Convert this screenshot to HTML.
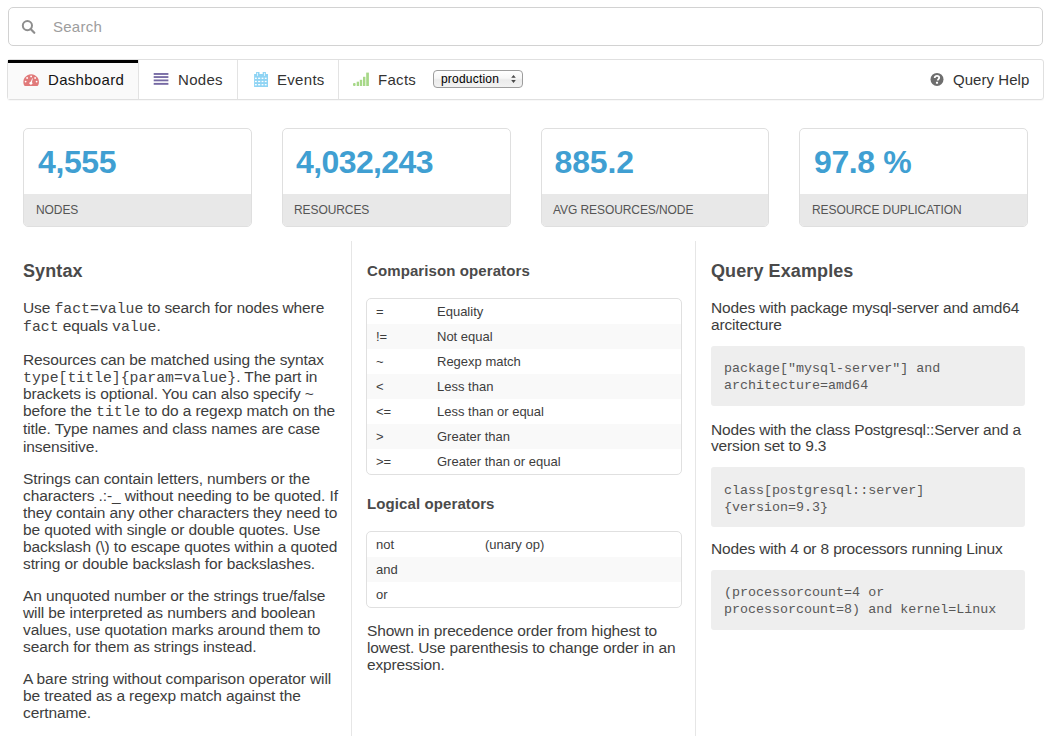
<!DOCTYPE html><html><head><meta charset="utf-8"><title>Query Help</title><style>
*{margin:0;padding:0;box-sizing:border-box}
html,body{width:1051px;height:745px;overflow:hidden;background:#fff;font-family:"Liberation Sans",sans-serif;color:#333}
.l{position:absolute;white-space:nowrap}
.a{position:absolute}
code{font-family:"Liberation Mono",monospace;font-size:14.8px;color:#444;letter-spacing:0}
.box{position:absolute;border:1px solid #dfdfdf;border-radius:5px;overflow:hidden;background:#fff}
.box .ft{position:absolute;left:0;right:0;bottom:0;height:32px;background:#e8e8e8}
.vsep{position:absolute;top:241px;width:1px;height:495px;background:#e6e6e6}
.tbl{position:absolute;border:1px solid #e0e0e0;border-radius:5px;overflow:hidden;background:#fff}
.stripe{position:absolute;left:0;right:0;height:25px;background:#f9f9f9}
.pre{position:absolute;background:#eeeeee;border-radius:3px}
</style></head><body>
<div class="a" style="left:8px;top:7px;width:1035px;height:39px;border:1px solid #d2d2d2;border-radius:5px"></div>
<svg class="a" style="left:20px;top:18px" width="18" height="18" viewBox="0 0 18 18"><circle cx="7.4" cy="7.6" r="4.6" fill="none" stroke="#8e8e8e" stroke-width="2"/><line x1="10.6" y1="11" x2="14.3" y2="14.8" stroke="#8e8e8e" stroke-width="2.2" stroke-linecap="round"/></svg>
<div class="l" style="left:53px;top:18px;font-size:15px;line-height:18px;color:#9d9d9d;font-weight:normal;letter-spacing:0.25px">Search</div>
<div class="a" style="left:7px;top:59px;width:1037px;height:41px;border:1px solid #e0e0e0;border-radius:3px;box-shadow:0 1px 1px rgba(0,0,0,0.03)"></div>
<div class="a" style="left:8px;top:60px;width:130px;height:39px;background:#fafafa"></div>
<div class="a" style="left:8px;top:60px;width:130px;height:3px;background:#000"></div>
<div class="a" style="left:138px;top:60px;width:1px;height:39px;background:#e3e3e3"></div>
<div class="a" style="left:237px;top:60px;width:1px;height:39px;background:#e3e3e3"></div>
<div class="a" style="left:338px;top:60px;width:1px;height:39px;background:#e3e3e3"></div>
<svg class="a" style="left:22px;top:72px" width="18" height="16" viewBox="0 0 18 16"><path d="M2.08 13.3 A7.8 7.8 0 1 1 16.22 13.3 Q15.9 14 15.2 14 L3.1 14 Q2.4 14 2.08 13.3 Z" fill="#e17a7a"/><g fill="#fff"><circle cx="9.1" cy="4.4" r="0.9"/><circle cx="5.1" cy="6.0" r="0.9"/><circle cx="13.1" cy="6.0" r="0.9"/><circle cx="3.6" cy="9.6" r="0.9"/><circle cx="14.6" cy="9.6" r="0.9"/><circle cx="8.9" cy="11.2" r="1.45"/><path d="M8.3 11.0 L10.2 6.3 L10.8 6.5 L9.6 11.3 Z"/></g></svg>
<div class="l" style="left:48px;top:71px;font-size:15px;line-height:18px;color:#141414;font-weight:normal;letter-spacing:0.3px">Dashboard</div>
<svg class="a" style="left:153px;top:72px" width="16" height="14" viewBox="0 0 16 14"><g fill="#7569a3"><rect x="0.7" y="1.05" width="14.7" height="1.85"/><rect x="0.7" y="4.15" width="14.7" height="1.8"/><rect x="0.7" y="7.5" width="14.7" height="1.8"/><rect x="0.7" y="10.9" width="14.7" height="1.9"/></g></svg>
<div class="l" style="left:178px;top:71px;font-size:15px;line-height:18px;color:#333;font-weight:normal;letter-spacing:0.3px">Nodes</div>
<svg class="a" style="left:254px;top:72px" width="15" height="15" viewBox="0 0 15 15"><path d="M0.1 2.1 H2.1 V0.05 H5.5 V2.1 H8.7 V0.05 H11.9 V2.1 H14 V14.9 H0.1 Z" fill="#8fd4f4"/><g fill="#fff"><rect x="1.0" y="5.65" width="1.8" height="1.3"/><rect x="4.1" y="5.65" width="2.1" height="1.3"/><rect x="7.6" y="5.65" width="1.8" height="1.3"/><rect x="10.8" y="5.65" width="1.8" height="1.3"/><rect x="1.0" y="8.85" width="1.8" height="1.3"/><rect x="4.1" y="8.85" width="2.1" height="1.3"/><rect x="7.6" y="8.85" width="1.8" height="1.3"/><rect x="10.8" y="8.85" width="1.8" height="1.3"/><rect x="1.0" y="12.05" width="1.8" height="1.3"/><rect x="4.1" y="12.05" width="2.1" height="1.3"/><rect x="7.6" y="12.05" width="1.8" height="1.3"/><rect x="10.8" y="12.05" width="1.8" height="1.3"/><rect x="3.3" y="0.9" width="0.7" height="3"/><rect x="10.1" y="0.9" width="0.7" height="3"/></g></svg>
<div class="l" style="left:277px;top:71px;font-size:15px;line-height:18px;color:#333;font-weight:normal;letter-spacing:0.3px">Events</div>
<svg class="a" style="left:353px;top:72px" width="17" height="15" viewBox="0 0 17 15"><g fill="#a7d888"><rect x="0" y="11" width="2.6" height="3" rx="1"/><rect x="3.7" y="9.7" width="2.3" height="4.3"/><rect x="6.8" y="7.8" width="2.4" height="6.2"/><rect x="10" y="4.8" width="2.4" height="9.2"/><rect x="13.2" y="0.6" width="2.7" height="13.4"/></g></svg>
<div class="l" style="left:378px;top:71px;font-size:15px;line-height:18px;color:#333;font-weight:normal;letter-spacing:0.3px">Facts</div>
<div class="a" style="left:433px;top:70px;width:90px;height:18px;border:1px solid #9d9d9d;border-radius:4px;background:linear-gradient(#ffffff 0%,#f6f6f6 45%,#ebebeb 55%,#f2f2f2 100%)"></div>
<div class="l" style="left:441px;top:72px;font-size:12px;line-height:14px;color:#000;font-weight:normal;letter-spacing:0.2px">production</div>
<svg class="a" style="left:510px;top:74px" width="7" height="10" viewBox="0 0 7 10"><path d="M1.2 3.8 L3.5 0.9 L5.8 3.8 Z M1.2 5.9 L5.8 5.9 L3.5 8.9 Z" fill="#4a4a4a"/></svg>
<svg class="a" style="left:929px;top:72px" width="16" height="16" viewBox="0 0 16 16"><circle cx="8" cy="7.4" r="6.5" fill="#6e6e6e"/><path d="M5.7 5.9 C5.7 4.5 6.7 3.9 8 3.9 C9.3 3.9 10.2 4.6 10.2 5.7 C10.2 7.1 8.75 7.2 8.75 8.6" fill="none" stroke="#fff" stroke-width="1.8"/><rect x="6.95" y="9.8" width="2.1" height="1.9" fill="#fff"/></svg>
<div class="l" style="left:953px;top:71px;font-size:15px;line-height:18px;color:#333;font-weight:normal;letter-spacing:0.05px">Query Help</div>
<div class="box" style="left:23.00px;top:128px;width:228.75px;height:99px"><div class="ft"></div></div>
<div class="l" style="left:38px;top:144px;font-size:32px;line-height:36px;color:#409fd2;font-weight:bold;letter-spacing:-0.4px">4,555</div>
<div class="l" style="left:36px;top:203px;font-size:12px;line-height:14px;color:#555;font-weight:normal;letter-spacing:-0.08px">NODES</div>
<div class="box" style="left:281.75px;top:128px;width:228.75px;height:99px"><div class="ft"></div></div>
<div class="l" style="left:296px;top:144px;font-size:32px;line-height:36px;color:#409fd2;font-weight:bold;letter-spacing:-0.6px">4,032,243</div>
<div class="l" style="left:294px;top:203px;font-size:12px;line-height:14px;color:#555;font-weight:normal;letter-spacing:-0.08px">RESOURCES</div>
<div class="box" style="left:540.50px;top:128px;width:228.75px;height:99px"><div class="ft"></div></div>
<div class="l" style="left:554.5px;top:144px;font-size:32px;line-height:36px;color:#409fd2;font-weight:bold;letter-spacing:-0.15px">885.2</div>
<div class="l" style="left:553px;top:203px;font-size:12px;line-height:14px;color:#555;font-weight:normal;letter-spacing:-0.08px">AVG RESOURCES/NODE</div>
<div class="box" style="left:799.25px;top:128px;width:228.75px;height:99px"><div class="ft"></div></div>
<div class="l" style="left:814px;top:144px;font-size:32px;line-height:36px;color:#409fd2;font-weight:bold;letter-spacing:-0.4px">97.8 %</div>
<div class="l" style="left:812px;top:203px;font-size:12px;line-height:14px;color:#555;font-weight:normal;letter-spacing:-0.08px">RESOURCE DUPLICATION</div>
<div class="vsep" style="left:351px"></div>
<div class="vsep" style="left:695px"></div>
<div class="l" style="left:23px;top:260px;font-size:18px;line-height:22px;color:#4a4a4a;font-weight:bold;letter-spacing:0.1px">Syntax</div>
<div class="l" style="left:23px;top:299px;font-size:15.5px;line-height:17px;color:#3d3d3d;font-weight:normal;letter-spacing:-0.1px">Use <code>fact=value</code> to search for nodes where</div>
<div class="l" style="left:23px;top:317px;font-size:15.5px;line-height:17px;color:#3d3d3d;font-weight:normal;letter-spacing:-0.1px"><code>fact</code> equals <code>value</code>.</div>
<div class="l" style="left:23px;top:351px;font-size:15.5px;line-height:17px;color:#3d3d3d;font-weight:normal;letter-spacing:-0.1px">Resources can be matched using the syntax</div>
<div class="l" style="left:23px;top:368px;font-size:15.5px;line-height:17px;color:#3d3d3d;font-weight:normal;letter-spacing:-0.1px"><code>type[title]{param=value}</code>. The part in</div>
<div class="l" style="left:23px;top:385px;font-size:15.5px;line-height:17px;color:#3d3d3d;font-weight:normal;letter-spacing:-0.1px">brackets is optional. You can also specify ~</div>
<div class="l" style="left:23px;top:402px;font-size:15.5px;line-height:17px;color:#3d3d3d;font-weight:normal;letter-spacing:-0.1px">before the <code>title</code> to do a regexp match on the</div>
<div class="l" style="left:23px;top:420px;font-size:15.5px;line-height:17px;color:#3d3d3d;font-weight:normal;letter-spacing:-0.1px">title. Type names and class names are case</div>
<div class="l" style="left:23px;top:438px;font-size:15.5px;line-height:17px;color:#3d3d3d;font-weight:normal;letter-spacing:-0.1px">insensitive.</div>
<div class="l" style="left:23px;top:470px;font-size:15.5px;line-height:17px;color:#3d3d3d;font-weight:normal;letter-spacing:-0.1px">Strings can contain letters, numbers or the</div>
<div class="l" style="left:23px;top:487px;font-size:15.5px;line-height:17px;color:#3d3d3d;font-weight:normal;letter-spacing:-0.1px">characters .:-_ without needing to be quoted. If</div>
<div class="l" style="left:23px;top:504px;font-size:15.5px;line-height:17px;color:#3d3d3d;font-weight:normal;letter-spacing:-0.1px">they contain any other characters they need to</div>
<div class="l" style="left:23px;top:521px;font-size:15.5px;line-height:17px;color:#3d3d3d;font-weight:normal;letter-spacing:-0.1px">be quoted with single or double quotes. Use</div>
<div class="l" style="left:23px;top:538px;font-size:15.5px;line-height:17px;color:#3d3d3d;font-weight:normal;letter-spacing:-0.1px">backslash (\) to escape quotes within a quoted</div>
<div class="l" style="left:23px;top:555px;font-size:15.5px;line-height:17px;color:#3d3d3d;font-weight:normal;letter-spacing:-0.1px">string or double backslash for backslashes.</div>
<div class="l" style="left:23px;top:587px;font-size:15.5px;line-height:17px;color:#3d3d3d;font-weight:normal;letter-spacing:-0.1px">An unquoted number or the strings true/false</div>
<div class="l" style="left:23px;top:604px;font-size:15.5px;line-height:17px;color:#3d3d3d;font-weight:normal;letter-spacing:-0.1px">will be interpreted as numbers and boolean</div>
<div class="l" style="left:23px;top:621px;font-size:15.5px;line-height:17px;color:#3d3d3d;font-weight:normal;letter-spacing:-0.1px">values, use quotation marks around them to</div>
<div class="l" style="left:23px;top:638px;font-size:15.5px;line-height:17px;color:#3d3d3d;font-weight:normal;letter-spacing:-0.1px">search for them as strings instead.</div>
<div class="l" style="left:23px;top:670px;font-size:15.5px;line-height:17px;color:#3d3d3d;font-weight:normal;letter-spacing:-0.1px">A bare string without comparison operator will</div>
<div class="l" style="left:23px;top:687px;font-size:15.5px;line-height:17px;color:#3d3d3d;font-weight:normal;letter-spacing:-0.1px">be treated as a regexp match against the</div>
<div class="l" style="left:23px;top:704px;font-size:15.5px;line-height:17px;color:#3d3d3d;font-weight:normal;letter-spacing:-0.1px">certname.</div>
<div class="l" style="left:367px;top:262px;font-size:15px;line-height:18px;color:#4a4a4a;font-weight:bold;letter-spacing:0.1px">Comparison operators</div>
<div class="tbl" style="left:366px;top:298px;width:316px;height:177px"><div class="stripe" style="top:25px"></div><div class="stripe" style="top:75px"></div><div class="stripe" style="top:125px"></div></div>
<div class="l" style="left:376px;top:304px;font-size:13px;line-height:16px;color:#3d3d3d;font-weight:normal;">=</div>
<div class="l" style="left:437px;top:304px;font-size:13px;line-height:16px;color:#3d3d3d;font-weight:normal;">Equality</div>
<div class="l" style="left:376px;top:329px;font-size:13px;line-height:16px;color:#3d3d3d;font-weight:normal;">!=</div>
<div class="l" style="left:437px;top:329px;font-size:13px;line-height:16px;color:#3d3d3d;font-weight:normal;">Not equal</div>
<div class="l" style="left:376px;top:354px;font-size:13px;line-height:16px;color:#3d3d3d;font-weight:normal;">~</div>
<div class="l" style="left:437px;top:354px;font-size:13px;line-height:16px;color:#3d3d3d;font-weight:normal;">Regexp match</div>
<div class="l" style="left:376px;top:379px;font-size:13px;line-height:16px;color:#3d3d3d;font-weight:normal;">&lt;</div>
<div class="l" style="left:437px;top:379px;font-size:13px;line-height:16px;color:#3d3d3d;font-weight:normal;">Less than</div>
<div class="l" style="left:376px;top:404px;font-size:13px;line-height:16px;color:#3d3d3d;font-weight:normal;">&lt;=</div>
<div class="l" style="left:437px;top:404px;font-size:13px;line-height:16px;color:#3d3d3d;font-weight:normal;">Less than or equal</div>
<div class="l" style="left:376px;top:429px;font-size:13px;line-height:16px;color:#3d3d3d;font-weight:normal;">&gt;</div>
<div class="l" style="left:437px;top:429px;font-size:13px;line-height:16px;color:#3d3d3d;font-weight:normal;">Greater than</div>
<div class="l" style="left:376px;top:454px;font-size:13px;line-height:16px;color:#3d3d3d;font-weight:normal;">&gt;=</div>
<div class="l" style="left:437px;top:454px;font-size:13px;line-height:16px;color:#3d3d3d;font-weight:normal;">Greater than or equal</div>
<div class="l" style="left:367px;top:495px;font-size:15px;line-height:18px;color:#4a4a4a;font-weight:bold;letter-spacing:0.1px">Logical operators</div>
<div class="tbl" style="left:366px;top:531px;width:316px;height:77px"><div class="stripe" style="top:25px"></div></div>
<div class="l" style="left:376px;top:537px;font-size:13px;line-height:16px;color:#3d3d3d;font-weight:normal;">not</div>
<div class="l" style="left:485px;top:537px;font-size:13px;line-height:16px;color:#3d3d3d;font-weight:normal;">(unary op)</div>
<div class="l" style="left:376px;top:562px;font-size:13px;line-height:16px;color:#3d3d3d;font-weight:normal;">and</div>
<div class="l" style="left:376px;top:587px;font-size:13px;line-height:16px;color:#3d3d3d;font-weight:normal;">or</div>
<div class="l" style="left:367px;top:622px;font-size:15.5px;line-height:17px;color:#3d3d3d;font-weight:normal;letter-spacing:-0.155px">Shown in precedence order from highest to</div>
<div class="l" style="left:367px;top:639px;font-size:15.5px;line-height:17px;color:#3d3d3d;font-weight:normal;letter-spacing:-0.155px">lowest. Use parenthesis to change order in an</div>
<div class="l" style="left:367px;top:656px;font-size:15.5px;line-height:17px;color:#3d3d3d;font-weight:normal;letter-spacing:-0.155px">expression.</div>
<div class="l" style="left:711px;top:260px;font-size:18px;line-height:22px;color:#4a4a4a;font-weight:bold;letter-spacing:0.1px">Query Examples</div>
<div class="l" style="left:711px;top:299px;font-size:15.5px;line-height:17px;color:#3d3d3d;font-weight:normal;letter-spacing:-0.155px">Nodes with package mysql-server and amd64</div>
<div class="l" style="left:711px;top:316px;font-size:15.5px;line-height:17px;color:#3d3d3d;font-weight:normal;letter-spacing:-0.155px">arcitecture</div>
<div class="pre" style="left:711px;top:346px;width:314px;height:60px"></div>
<div class="l" style="left:724px;top:360px;font-size:13.35px;line-height:17px;color:#585858;font-weight:normal;font-family:'Liberation Mono',monospace">package["mysql-server"] and</div>
<div class="l" style="left:724px;top:377px;font-size:13.35px;line-height:17px;color:#585858;font-weight:normal;font-family:'Liberation Mono',monospace">architecture=amd64</div>
<div class="l" style="left:711px;top:421px;font-size:15.5px;line-height:17px;color:#3d3d3d;font-weight:normal;letter-spacing:-0.155px">Nodes with the class Postgresql::Server and a</div>
<div class="l" style="left:711px;top:437px;font-size:15.5px;line-height:17px;color:#3d3d3d;font-weight:normal;letter-spacing:-0.155px">version set to 9.3</div>
<div class="pre" style="left:711px;top:467px;width:314px;height:60px"></div>
<div class="l" style="left:724px;top:482px;font-size:13.35px;line-height:17px;color:#585858;font-weight:normal;font-family:'Liberation Mono',monospace">class[postgresql::server]</div>
<div class="l" style="left:724px;top:499px;font-size:13.35px;line-height:17px;color:#585858;font-weight:normal;font-family:'Liberation Mono',monospace">{version=9.3}</div>
<div class="l" style="left:711px;top:540px;font-size:15.5px;line-height:17px;color:#3d3d3d;font-weight:normal;letter-spacing:-0.155px">Nodes with 4 or 8 processors running Linux</div>
<div class="pre" style="left:711px;top:570px;width:314px;height:60px"></div>
<div class="l" style="left:724px;top:584px;font-size:13.35px;line-height:17px;color:#585858;font-weight:normal;font-family:'Liberation Mono',monospace">(processorcount=4 or</div>
<div class="l" style="left:724px;top:601px;font-size:13.35px;line-height:17px;color:#585858;font-weight:normal;font-family:'Liberation Mono',monospace">processorcount=8) and kernel=Linux</div>
</body></html>
